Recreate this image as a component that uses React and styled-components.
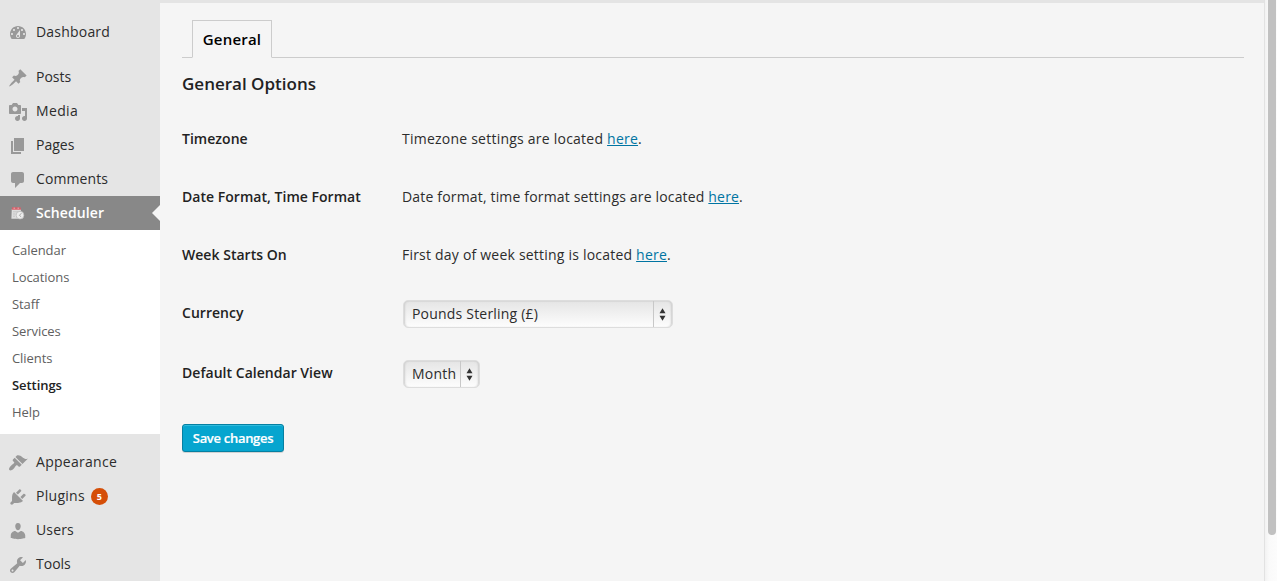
import React from 'react';
import styled, { createGlobalStyle, css } from 'styled-components';

const GlobalStyle = createGlobalStyle`
  * { box-sizing: border-box; }
  body {
    margin: 0;
    overflow: hidden;
    background: #f5f5f5;
    color: #2c2c2c;
    font: 14px/20px "Open Sans", sans-serif;
  }
`;

const Page = styled.div`
  display: flex;
  height: 581px;
  overflow: hidden;
`;

const Sidebar = styled.nav`
  flex: none;
  width: 160px;
  padding-top: 15px;
  background: #e5e5e5;
`;

const MenuGroup = styled.div`
  margin-bottom: 11px;
`;

const MenuItem = styled.a`
  position: relative;
  display: flex;
  align-items: center;
  height: 34px;
  padding-left: 8px;
  color: #2c2c2c;
  ${(p) => p.$current && css`
    background: #888;
    color: #fff;
    font-weight: 600;
    &::after {
      content: '';
      position: absolute;
      right: 0;
      top: 9px;
      border: 8px solid transparent;
      border-left: 0;
      border-right-color: #f5f5f5;
    }
  `}
`;

const MenuIcon = styled.svg`
  flex: none;
  width: 20px;
  height: 20px;
  margin: 2px 8px 0 0;
  fill: #999;
`;

const MenuLabel = styled.span`
  letter-spacing: ${(p) => p.$spacing || 0}px;
`;

const Badge = styled.span`
  width: 17px;
  height: 17px;
  margin: 1px 0 0 6px;
  border-radius: 50%;
  background: #d54e07;
  color: #fff;
  font-size: 9px;
  font-weight: 700;
  line-height: 17px;
  text-align: center;
`;

const SubMenu = styled.div`
  height: 204px;
  padding: 7px 12px 8px;
  background: #fff;
`;

const SubItem = styled.a`
  display: block;
  color: ${(p) => (p.$current ? '#222' : '#606060')};
  font-size: 13px;
  font-weight: ${(p) => (p.$current ? 600 : 400)};
  letter-spacing: -0.07px;
  line-height: 27px;
`;

const Content = styled.main`
  flex: 1;
  padding: 17px 20px 0 22px;
  border-top: 3px solid #e4e4e4;
  background: #f5f5f5;
`;

const TabBar = styled.div`
  display: flex;
  height: 38px;
  padding-left: 10px;
  border-bottom: 1px solid #ccc;
`;

const Tab = styled.a`
  height: 38px;
  width: 80px;
  border: 1px solid #ccc;
  border-bottom-color: #f5f5f5;
  background: #f5f5f5;
  color: #000;
  font-size: 15px;
  font-weight: 600;
  letter-spacing: 0.2px;
  line-height: 37px;
  text-align: center;
`;

const Heading = styled.h3`
  margin: 14px 0 0;
  color: #222;
  font-size: 17px;
  font-weight: 600;
  line-height: 24px;
`;

const OptionRow = styled.div`
  display: flex;
  align-items: center;
  height: ${(p) => p.$height || 58}px;
`;

const OptionList = styled.div`
  padding-top: 14px;
`;

const OptionLabel = styled.div`
  flex: none;
  width: 220px;
  color: #222;
  font-weight: 600;
  letter-spacing: 0.03px;
`;

const Description = styled.div`
  letter-spacing: ${(p) => p.$spacing}px;
`;

const Link = styled.a`
  color: #0074a2;
  text-decoration: underline;
`;

const SelectBox = styled.div`
  display: flex;
  width: ${(p) => p.$width}px;
  height: 28px;
  margin: 2px 0 0 1px;
  border: 1px solid #ddd;
  border-radius: 5px;
  background: linear-gradient(#e5e5e5, #fdfdfd);
  box-shadow: inset 2px 0 2px -1px #cdcdcd, inset -2px 0 2px -1px #cdcdcd, inset 0 1px 1px #dadada;
  color: #2c2c2c;
  line-height: 26px;
`;

const SelectValue = styled.span`
  flex: 1;
  padding-left: 8px;
  letter-spacing: 0.2px;
  white-space: nowrap;
`;

const SelectArrows = styled.span`
  display: flex;
  flex: none;
  align-items: center;
  width: 19px;
  padding-left: 5px;
  border-left: 1px solid #c8c8c8;
`;

const SaveButton = styled.button`
  display: block;
  width: 102px;
  height: 28px;
  margin-top: 20px;
  padding: 0;
  border: 1px solid #0580a2;
  border-radius: 3px;
  background: #06a5cf;
  box-shadow: inset 0 1px 0 #30bbdd, 0 1px 0 rgba(0, 0, 0, 0.14);
  color: #fff;
  font: 600 13px/26px "Open Sans", sans-serif;
  letter-spacing: -0.3px;
  -webkit-text-stroke: 0.2px #fff;
`;

const ScrollTrack = styled.div`
  flex: none;
  display: flex;
  justify-content: flex-end;
  width: 13px;
  padding-right: 1px;
  border-left: 1px solid #e2e2e2;
  background: linear-gradient(90deg, #f2f2f2, #fafafa 35%, #fcfcfc);
`;

const ScrollThumb = styled.div`
  width: 8px;
  height: 535px;
  border-radius: 0 0 4px 4px;
  background: #c1c1c1;
`;

const icons = {
  dashboard: 'M3.76 16h12.48c1.1-1.37 1.76-3.11 1.76-5 0-4.42-3.58-8-8-8s-8 3.58-8 8c0 1.89.66 3.63 1.76 5zM10 4c.55 0 1 .45 1 1s-.45 1-1 1-1-.45-1-1 .45-1 1-1zM6 6c.55 0 1 .45 1 1s-.45 1-1 1-1-.45-1-1 .45-1 1-1zm8 0c.55 0 1 .45 1 1s-.45 1-1 1-1-.45-1-1 .45-1 1-1zm-5.37 5.55L12 7v6c0 1.1-.9 2-2 2s-2-.9-2-2c0-.57.24-1.08.63-1.45zM4 10c.55 0 1 .45 1 1s-.45 1-1 1-1-.45-1-1 .45-1 1-1zm12 0c.55 0 1 .45 1 1s-.45 1-1 1-1-.45-1-1 .45-1 1-1zm-5 3c0-.55-.45-1-1-1s-1 .45-1 1 .45 1 1 1 1-.45 1-1z',
  posts: 'M10.44 3.02l1.82-1.82 6.36 6.35-1.83 1.82c-1.05-.68-2.48-.57-3.41.36l-.75.75c-.92.93-1.04 2.35-.35 3.41l-1.83 1.82-2.41-2.41-2.8 2.79c-.42.42-3.38 2.71-3.8 2.29s1.86-3.39 2.28-3.81l2.79-2.79L4.1 9.36l1.83-1.82c1.05.69 2.48.57 3.4-.36l.75-.75c.93-.92 1.05-2.35.36-3.41z',
  media: 'M13 11V4c0-.55-.45-1-1-1h-1.67L9 1H5L3.67 3H2c-.55 0-1 .45-1 1v7c0 .55.45 1 1 1h10c.55 0 1-.45 1-1zM7 4.5c1.38 0 2.5 1.12 2.5 2.5S8.38 9.5 7 9.5 4.5 8.38 4.5 7 5.62 4.5 7 4.5zM14 6h5v10.5c0 1.38-1.12 2.5-2.5 2.5S14 17.88 14 16.5s1.12-2.5 2.5-2.5c.17 0 .34.02.5.05V9h-3V6zm-4 8.05V13h2v3.5c0 1.38-1.12 2.5-2.5 2.5S7 17.88 7 16.5 8.12 14 9.5 14c.17 0 .34.02.5.05z',
  pages: 'M6 15V2h10v13H6zm-1 1h8v2H3V5h2v11z',
  comments: 'M5 2h9c1.1 0 2 .9 2 2v7c0 1.1-.9 2-2 2h-2l-5 5v-5H5c-1.1 0-2-.9-2-2V4c0-1.1.9-2 2-2z',
  appearance: 'M14.48 11.06L7.41 3.99l1.5-1.5c.5-.56 2.3-.47 3.51.32 1.21.8 1.43 1.28 2.91 2.1 1.18.64 2.45 1.26 4.45.85zm-.71.71L6.7 4.7 4.93 6.47c-.39.39-.39 1.02 0 1.41l1.06 1.06c.39.39.39 1.03 0 1.42-.6.6-1.43 1.11-2.21 1.69-.35.26-.7.53-1.01.84C1.43 14.23.4 16.08 1.4 17.07c.99 1 2.84-.03 4.18-1.36.31-.31.58-.66.85-1.02.57-.78 1.08-1.61 1.69-2.21.39-.39 1.02-.39 1.41 0l1.06 1.06c.39.39 1.02.39 1.41 0z',
  plugins: 'M13.11 4.36L9.87 7.6 8 5.73l3.24-3.24c.35-.34 1.05-.2 1.56.32.52.51.66 1.21.31 1.55zm-8 1.77l.91-1.12 9.01 9.01-1.19.84c-.71.71-2.63 1.16-3.82 1.16H6.14L4.9 17.26c-.59.59-1.54.59-2.12 0-.59-.58-.59-1.53 0-2.12l1.24-1.24v-3.88c0-1.13.4-3.19 1.09-3.89zm7.26 3.97l3.24-3.24c.34-.35 1.04-.21 1.55.31.52.51.66 1.21.31 1.55l-3.24 3.25z',
  users: 'M10 9.25c-2.27 0-2.73-3.44-2.73-3.44C7 4.02 7.82 2 9.97 2c2.16 0 2.98 2.02 2.71 3.81 0 0-.41 3.44-2.68 3.44zm0 2.57L12.72 10c2.39 0 4.52 2.33 4.52 4.53v2.49s-3.65 1.13-7.24 1.13c-3.65 0-7.24-1.13-7.24-1.13v-2.49c0-2.25 1.94-4.48 4.47-4.48z',
  tools: 'M16.68 9.77c-1.34 1.34-3.3 1.67-4.95.99l-5.41 6.52c-.99.99-2.59.99-3.58 0s-.99-2.59 0-3.57l6.52-5.42c-.68-1.65-.35-3.61.99-4.95 1.28-1.28 3.12-1.62 4.72-1.06l-2.89 2.89 2.82 2.82 2.86-2.87c.53 1.58.18 3.39-1.08 4.65zM3.81 16.21c.4.39 1.04.39 1.43 0 .4-.4.4-1.04 0-1.43-.39-.4-1.03-.4-1.43 0-.39.39-.39 1.03 0 1.43z',
};

function Entry({ icon, label, badge, spacing }) {
  return (
    <MenuItem>
      <MenuIcon viewBox="0 0 20 20"><path d={icons[icon]} /></MenuIcon>
      <MenuLabel $spacing={spacing}>{label}</MenuLabel>
      {badge && <Badge>{badge}</Badge>}
    </MenuItem>
  );
}

function SchedulerIcon() {
  return (
    <MenuIcon viewBox="0 0 20 20">
      <path d="M3.8 5h9l.8 9.8H3.4z" fill="#dedede" />
      <path d="M4 3.2h8.6l.4 2.6H3.8z" fill="#d4606a" />
      <path d="M5.5 4.2h1.6M9.5 4.2h1.6" stroke="#efc3c6" strokeWidth=".8" />
      <path d="M5 7.8h6.5M5 10h2.5M5 12.2h2" stroke="#bcbcbc" strokeWidth=".7" />
      <circle cx="12" cy="11.2" r="3.9" fill="#ededed" stroke="#b4b4b4" strokeWidth=".7" />
      <path d="M13.4 9.2l-2 2.2 1.8 1.4" fill="none" stroke="#8c8c8c" strokeWidth=".7" />
    </MenuIcon>
  );
}

function Select({ value, width }) {
  return (
    <SelectBox $width={width}>
      <SelectValue>{value}</SelectValue>
      <SelectArrows>
        <svg width="7" height="13" viewBox="0 0 7 13" fill="#333">
          <path d="M3.5 .3l3 5h-6zM.5 7.7h6l-3 5z" />
        </svg>
      </SelectArrows>
    </SelectBox>
  );
}

const subItems = ['Calendar', 'Locations', 'Staff', 'Services', 'Clients', 'Settings', 'Help'];

export default function App() {
  return (
    <Page>
      <GlobalStyle />
      <Sidebar>
        <MenuGroup><Entry icon="dashboard" label="Dashboard" spacing={0.2} /></MenuGroup>
        <MenuGroup>
          <Entry icon="posts" label="Posts" />
          <Entry icon="media" label="Media" spacing={0.35} />
          <Entry icon="pages" label="Pages" />
          <Entry icon="comments" label="Comments" spacing={0.1} />
          <MenuItem $current>
            <SchedulerIcon />
            <MenuLabel $spacing={0.1}>Scheduler</MenuLabel>
          </MenuItem>
          <SubMenu>
            {subItems.map((item) => (
              <SubItem key={item} $current={item === 'Settings'}>{item}</SubItem>
            ))}
          </SubMenu>
        </MenuGroup>
        <Entry icon="appearance" label="Appearance" spacing={0.28} />
        <Entry icon="plugins" label="Plugins" badge="5" spacing={0.28} />
        <Entry icon="users" label="Users" spacing={0.15} />
        <Entry icon="tools" label="Tools" />
      </Sidebar>
      <Content>
        <TabBar><Tab>General</Tab></TabBar>
        <Heading>General Options</Heading>
        <OptionList>
          <OptionRow>
            <OptionLabel>Timezone</OptionLabel>
            <Description $spacing={0.23}>Timezone settings are located <Link>here</Link>.</Description>
          </OptionRow>
          <OptionRow>
            <OptionLabel>Date Format, Time Format</OptionLabel>
            <Description $spacing={0.17}>Date format, time format settings are located <Link>here</Link>.</Description>
          </OptionRow>
          <OptionRow>
            <OptionLabel>Week Starts On</OptionLabel>
            <Description $spacing={0.21}>First day of week setting is located <Link>here</Link>.</Description>
          </OptionRow>
          <OptionRow $height={58}>
            <OptionLabel>Currency</OptionLabel>
            <Select value="Pounds Sterling (£)" width={270} />
          </OptionRow>
          <OptionRow $height={62}>
            <OptionLabel>Default Calendar View</OptionLabel>
            <Select value="Month" width={77} />
          </OptionRow>
        </OptionList>
        <SaveButton>Save changes</SaveButton>
      </Content>
      <ScrollTrack><ScrollThumb /></ScrollTrack>
    </Page>
  );
}
